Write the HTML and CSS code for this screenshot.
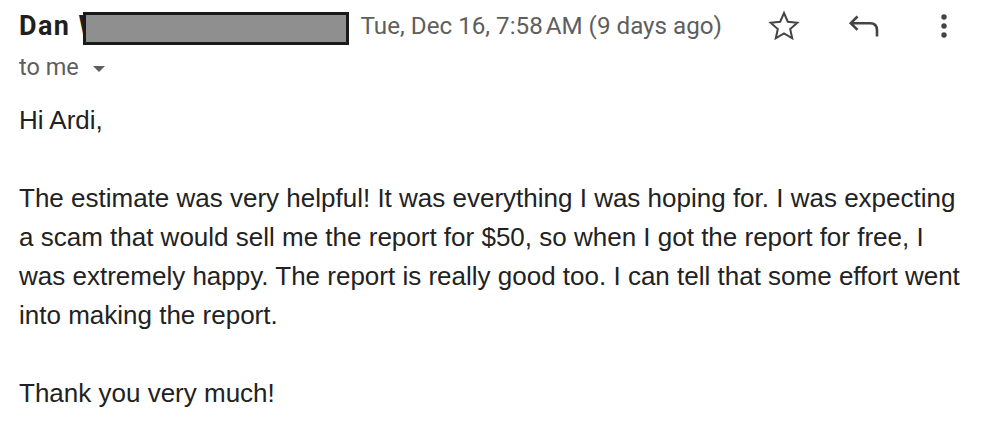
FILE: index.html
```html
<!DOCTYPE html>
<html lang="en">
<head>
<meta charset="utf-8">
<title>Email</title>
<link rel="stylesheet" href="styles.css">
</head>
<body>
<div class="mail">
  <div class="header">
    <div class="sender">
      <span class="name">Dan W</span><span class="redact"></span>
    </div>
    <div class="meta">
      <span class="date">Tue, Dec 16, 7:58&#8239;AM (9 days ago)</span>
      <div class="icons">
        <span class="icon" aria-label="Star">
          <svg width="32" height="32" viewBox="0 0 32 32"><polygon points="16,3 19.82,11.74 29.31,12.67 22.18,19.01 24.23,28.33 16,23.5 7.77,28.33 9.82,19.01 2.69,12.67 12.18,11.74" fill="none" stroke="#444" stroke-width="2" stroke-linejoin="miter"/></svg>
        </span>
        <span class="icon" aria-label="Reply">
          <svg width="32" height="24" viewBox="0 0 32 24"><path d="M9.5 2.5 L2.8 9.2 L9.5 15.9 M2.8 9.2 H22 Q29 9.2 29 16.2 V22.5" fill="none" stroke="#444" stroke-width="2.6"/></svg>
        </span>
        <span class="icon" aria-label="More">
          <svg width="8" height="26" viewBox="0 0 8 26"><circle cx="4" cy="4" r="2.7" fill="#444"/><circle cx="4" cy="13" r="2.7" fill="#444"/><circle cx="4" cy="22" r="2.7" fill="#444"/></svg>
        </span>
      </div>
    </div>
  </div>
  <div class="recipients">to me <span class="caret"></span></div>
  <div class="body">
    <p>Hi Ardi,</p>
    <p>The estimate was very helpful! It was everything I was hoping for. I was expecting a scam that would sell me the report for $50, so when I got the report for free, I was extremely happy. The report is really good too. I can tell that some effort went into making the report.</p>
    <p>Thank you very much!</p>
  </div>
</div>
</body>
</html>
```
FILE: styles.css
```css
html, body {
  margin: 0;
  padding: 0;
  background: #fff;
}

.mail {
  width: 984px;
  height: 434px;
  padding: 0 0 0 19px;
  box-sizing: border-box;
  overflow: hidden;
}

.header {
  display: flex;
  align-items: center;
  height: 52px;
}

.sender {
  flex: 1;
  display: flex;
  align-items: center;
}

.name {
  font-family: Roboto, "Liberation Sans", sans-serif;
  font-weight: 700;
  font-size: 27px;
  color: #1f1f1f;
  letter-spacing: 1.4px;
}

.redact {
  display: inline-block;
  box-sizing: border-box;
  width: 266px;
  height: 33px;
  margin-left: -20px;
  background: #8f8f8f;
  border: 3px solid #1a1a1a;
  margin-top: 4px;
}

.meta {
  display: flex;
  align-items: center;
}

.date {
  font-family: Roboto, "Liberation Sans", sans-serif;
  font-size: 24.2px;
  color: #5e5e5e;
  margin-right: 42px;
}

.icons {
  display: flex;
  gap: 40px;
  margin-right: 20px;
}

.icon {
  width: 40px;
  height: 40px;
  display: flex;
  align-items: center;
  justify-content: center;
}

.recipients {
  font-family: Roboto, "Liberation Sans", sans-serif;
  font-size: 23.5px;
  color: #5e5e5e;
  height: 40px;
  line-height: 30px;
}

.caret {
  display: inline-block;
  width: 0;
  height: 0;
  border-left: 6px solid transparent;
  border-right: 6px solid transparent;
  border-top: 6px solid #5e5e5e;
  margin-left: 8px;
  vertical-align: middle;
}

.body {
  font-family: Arial, "Liberation Sans", sans-serif;
  font-size: 26px;
  line-height: 39px;
  color: #222;
  padding-top: 9px;
  width: 950px;
}

.body p {
  margin: 0 0 39px 0;
}
```
